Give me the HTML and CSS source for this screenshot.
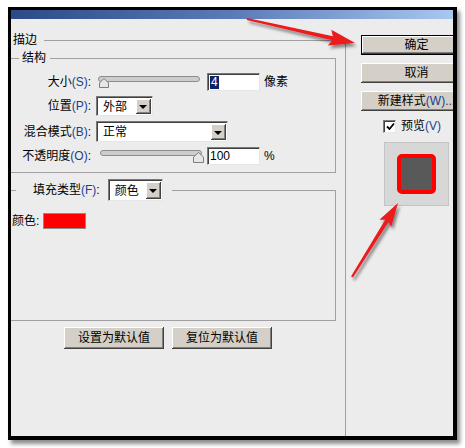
FILE: index.html
```html
<!DOCTYPE html>
<html lang="zh-CN">
<head>
<meta charset="utf-8">
<title>描边</title>
<link rel="stylesheet" href="styles.css">
</head>
<body>
<div class="dialog">
  <div class="titlebar"></div>
  <div class="content">
    <div class="left">
      <fieldset class="group stroke">
        <legend class="lg-stroke">描边</legend>
        <fieldset class="group structure">
          <legend class="lg-structure">结构</legend>
          <div class="row row-size">
            <span class="label">大小<span class="mn">(S)</span>:</span>
            <svg class="slider slider-size" width="102" height="12" viewBox="0 0 102 12">
              <rect x="0.5" y="0.5" width="101" height="5" rx="2.5" fill="#cdcdcd" stroke="#8c8c8c"/>
              <path d="M1.5 11.5 V7 L6 2.5 L10.5 7 V11.5 Z" fill="#e6e6e6" stroke="#7c7c7c"/>
            </svg>
            <span class="textbox tb-size"><span class="hl">4</span></span>
            <span class="unit">像素</span>
          </div>
          <div class="row row-pos">
            <span class="label">位置<span class="mn">(P)</span>:</span>
            <span class="select sel-pos"><span class="sel-text">外部</span><span class="drop"></span></span>
          </div>
          <div class="row row-blend">
            <span class="label">混合模式<span class="mn">(B)</span>:</span>
            <span class="select sel-blend"><span class="sel-text">正常</span><span class="drop"></span></span>
          </div>
          <div class="row row-opacity">
            <span class="label">不透明度<span class="mn">(O)</span>:</span>
            <svg class="slider slider-opacity" width="105" height="14" viewBox="0 0 105 14">
              <rect x="0.5" y="1.5" width="101" height="5" rx="2.5" fill="#cdcdcd" stroke="#8c8c8c"/>
              <path d="M93.5 13.5 V8 L98.5 3.5 L103.5 8 V13.5 Z" fill="#e6e6e6" stroke="#7c7c7c"/>
            </svg>
            <span class="textbox tb-opacity">100</span>
            <span class="unit">%</span>
          </div>
        </fieldset>
        <fieldset class="group fill">
          <legend class="lg-fill">
            <span class="label-inline">填充类型<span class="mn">(F)</span>:</span>
            <span class="select sel-fill"><span class="sel-text">颜色</span><span class="drop"></span></span>
          </legend>
          <div class="fill-body">
            <div class="color-row">
              <span>颜色:</span>
              <span class="swatch"></span>
            </div>
          </div>
        </fieldset>
        <div class="defaults">
          <button class="btn btn-default">设置为默认值</button>
          <button class="btn btn-default">复位为默认值</button>
        </div>
      </fieldset>
    </div>
    <div class="right">
      <button class="btn side-btn ok">确定</button>
      <button class="btn side-btn">取消</button>
      <button class="btn side-btn">新建样式<span class="mn">(W)...</span></button>
      <div class="check-row">
        <span class="checkbox">
          <svg width="9" height="9" viewBox="0 0 9 9"><path d="M1 4.5 L3.5 7 L8 1.5" fill="none" stroke="#000" stroke-width="1.8"/></svg>
        </span>
        <span class="check-label">预览<span class="mn">(V)</span></span>
      </div>
      <div class="preview">
        <div class="preview-shape"></div>
      </div>
    </div>
  </div>
</div>
<svg class="arrows" width="465" height="448" viewBox="0 0 465 448">
  <defs>
    <filter id="shadow" x="-20%" y="-20%" width="140%" height="140%">
      <feDropShadow dx="2" dy="3" stdDeviation="1.6" flood-color="#000" flood-opacity="0.45"/>
    </filter>
  </defs>
  <polygon filter="url(#shadow)" fill="#ea1a1f" points="247.2,18 332.9,36.2 331.3,29.8 355,43 327.9,45.4 332.1,40.2 246.8,20"/>
  <polygon filter="url(#shadow)" fill="#ea1a1f" points="353,277.6 388.6,221.9 391.2,227.1 398,203 379.4,219.7 385.2,219.8 351,276.4"/>
</svg>
</body>
</html>
```

FILE: styles.css
```css
* { box-sizing: border-box; }

html, body {
  margin: 0;
  padding: 0;
  background: #fff;
}

body {
  width: 465px;
  height: 448px;
  position: relative;
  overflow: hidden;
  font: 12px/16px "Liberation Sans", "Noto Sans CJK SC", sans-serif;
  color: #000;
}

.dialog {
  margin: 7px 0 0 8px;
  width: 449px;
  height: 433px;
  border-style: solid;
  border-color: #000;
  border-width: 3px 4px 4px 3px;
  box-shadow: 3px 4px 4px rgba(0, 0, 0, 0.45);
  background: #ececec;
  display: flex;
  flex-direction: column;
  overflow: hidden;
}

.titlebar {
  height: 9px;
  flex: none;
  background: linear-gradient(to right, #2c4a88, #5a7ab8 50%, #a8c8f0);
}

.content {
  flex: 1;
  display: flex;
  min-height: 0;
}

.left {
  width: 335px;
  flex: none;
  display: flex;
  flex-direction: column;
}

.right {
  flex: 1;
  min-width: 0;
  padding: 16px 0 0 15px;
  display: flex;
  flex-direction: column;
  align-items: flex-start;
}

/* group boxes */
.group {
  margin: 0;
  padding: 0;
  border: 0;
  min-width: 0;
}

.group > legend {
  line-height: 16px;
  padding: 0;
}

.stroke {
  margin-top: 13px;
  flex: 1;
  border-top: 1px solid #a0a0a0;
  border-right: 1px solid #a0a0a0;
}

.lg-stroke {
  padding: 0 7px 0 2px !important;
}

.structure {
  margin: 2px 9px 0 0;
  padding: 7px 0 7px 0;
  border-top: 1px solid #a0a0a0;
  border-right: 1px solid #a0a0a0;
  border-bottom: 1px solid #a0a0a0;
}

.lg-structure {
  margin-left: 8px;
  padding: 0 4px 0 3px !important;
}

.row {
  display: flex;
  align-items: center;
  margin-bottom: 5px;
}

.row:last-child { margin-bottom: 0; }

.row-size, .row-opacity { height: 18px; }
.row-pos { height: 20px; }
.row-blend { height: 21px; }

.label {
  width: 80px;
  flex: none;
  text-align: right;
  white-space: nowrap;
}

.mn { color: #1c3c90; }

.slider { flex: none; display: block; }
.slider-size { margin-left: 7px; }
.slider-opacity { margin-left: 9px; }

.textbox {
  width: 53px;
  height: 18px;
  flex: none;
  background: #fff;
  border: 1px solid;
  border-color: #7a7a7a #e6e6e6 #e6e6e6 #7a7a7a;
  box-shadow: inset 1px 1px 0 #404040;
  padding: 0 0 0 2px;
  line-height: 15px;
  display: flex;
  align-items: center;
}

.tb-size { margin-left: 7px; }
.tb-opacity { margin-left: 2px; }

.hl {
  background: #0a246a;
  color: #fff;
  padding: 0 1px;
  line-height: 13px;
}

.unit { margin-left: 4px; }

.select {
  flex: none;
  display: flex;
  align-items: stretch;
  background: #fff;
  border: 1px solid;
  border-color: #7a7a7a #e6e6e6 #e6e6e6 #7a7a7a;
  box-shadow: inset 1px 1px 0 #404040;
  padding: 2px 1px 1px 2px;
}

.sel-text {
  flex: 1;
  padding-left: 4px;
  display: flex;
  align-items: center;
}

.drop {
  width: 15px;
  flex: none;
  background: #d4d0c8;
  box-shadow: inset -1px -1px 0 #404040, inset 1px 1px 0 #fff, inset -2px -2px 0 #808080;
  display: flex;
  align-items: center;
  justify-content: center;
}

.drop::after {
  content: "";
  width: 0;
  height: 0;
  border-left: 4px solid transparent;
  border-right: 4px solid transparent;
  border-top: 4px solid #000;
  margin: 1px 1px 0 0;
}

.sel-pos { margin-left: 5px; width: 57px; height: 20px; }
.sel-blend { margin-left: 5px; width: 132px; height: 21px; }
.sel-fill { margin-left: 8px; width: 55px; height: 22px; }

/* fill group */
.fill {
  margin: 6px 9px 0 0;
  border-top: 1px solid #a0a0a0;
  border-right: 1px solid #a0a0a0;
  border-bottom: 1px solid #a0a0a0;
}

.lg-fill {
  margin-left: 5px;
  padding: 0 9px 0 17px !important;
  display: flex;
  align-items: center;
}

.label-inline { white-space: nowrap; }

.fill-body {
  height: 119px;
  padding: 12px 0 0 1px;
}

.color-row {
  display: flex;
  align-items: center;
  height: 16px;
}

.swatch {
  width: 43px;
  height: 16px;
  margin-left: 4px;
  background: #ff0000;
  border: 1px solid #8c8c8c;
}

.defaults {
  display: flex;
  gap: 8px;
  margin-top: 6px;
  padding-left: 53px;
}

/* buttons */
.btn {
  font: inherit;
  color: #000;
  margin: 0;
  padding: 0;
  border: 0;
  background: #d4d0c8;
  box-shadow: inset -1px -1px 0 #404040, inset 1px 1px 0 #fff, inset -2px -2px 0 #808080;
  display: flex;
  align-items: center;
  justify-content: center;
  white-space: nowrap;
}

.btn-default {
  width: 100px;
  height: 22px;
}

.side-btn {
  flex: none;
  width: 111px;
  height: 20px;
  margin-bottom: 8px;
}

.ok {
  outline: 1px solid #000;
  outline-offset: -1px;
  box-shadow: inset -2px -2px 0 #404040, inset 2px 2px 0 #fff, inset -3px -3px 0 #808080;
}

.check-row {
  display: flex;
  align-items: center;
  height: 14px;
  margin-left: 22px;
}

.checkbox {
  width: 13px;
  height: 13px;
  background: #fff;
  border: 1px solid;
  border-color: #7a7a7a #e6e6e6 #e6e6e6 #7a7a7a;
  box-shadow: inset 1px 1px 0 #404040;
  display: flex;
  align-items: center;
  justify-content: center;
  padding: 1px 0 0 1px;
}

.checkbox svg { display: block; }

.check-label { margin-left: 5px; }

.preview {
  margin: 9px 0 0 23px;
  width: 65px;
  height: 64px;
  background: #d7d7d7;
  border: 1px solid #c4c4c4;
  display: flex;
  align-items: center;
  justify-content: center;
}

.preview-shape {
  width: 39px;
  height: 40px;
  background: #595959;
  border: 4px solid #ff0000;
  border-radius: 5px;
}

.arrows {
  position: absolute;
  left: 0;
  top: 0;
  pointer-events: none;
}
```
